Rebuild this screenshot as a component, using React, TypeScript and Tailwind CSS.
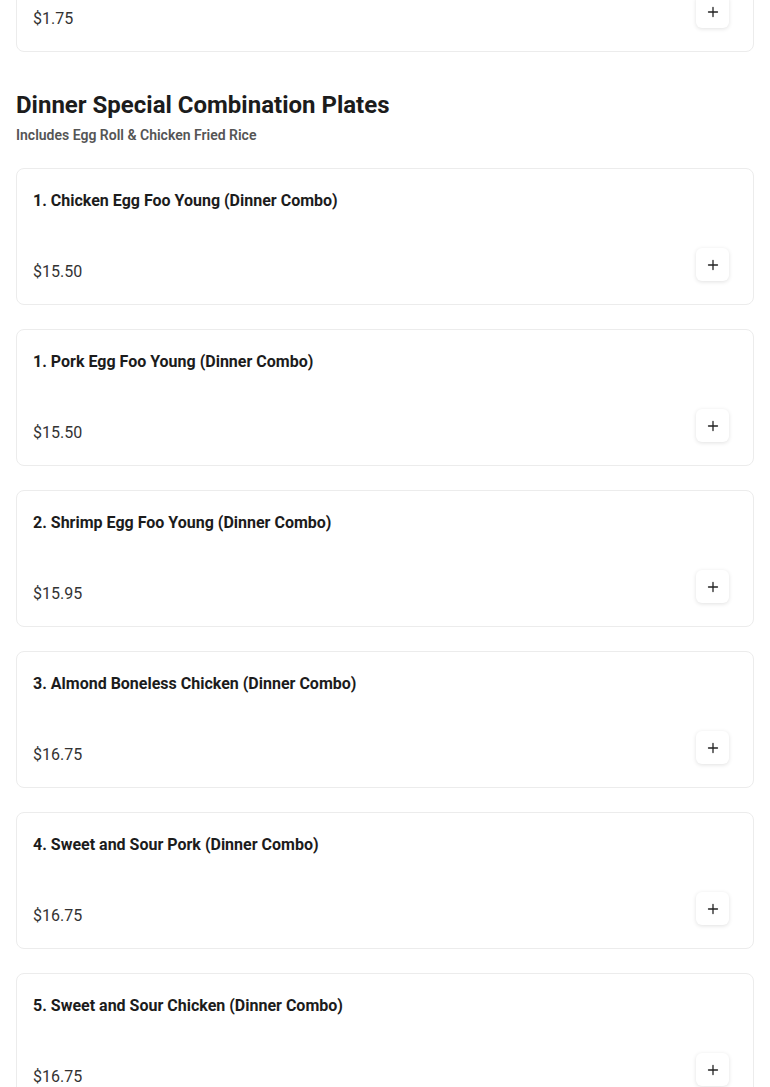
import React from "react";

type Item = { name: string; price: string };

const items: Item[] = [
  { name: "1. Chicken Egg Foo Young (Dinner Combo)", price: "$15.50" },
  { name: "1. Pork Egg Foo Young (Dinner Combo)", price: "$15.50" },
  { name: "2. Shrimp Egg Foo Young (Dinner Combo)", price: "$15.95" },
  { name: "3. Almond Boneless Chicken (Dinner Combo)", price: "$16.75" },
  { name: "4. Sweet and Sour Pork (Dinner Combo)", price: "$16.75" },
  { name: "5. Sweet and Sour Chicken (Dinner Combo)", price: "$16.75" },
];

function PlusIcon() {
  return (
    <svg width="12" height="12" viewBox="0 0 12 12" fill="none">
      <path d="M6 1.5v9M1.5 6h9" stroke="#222" strokeWidth="1.3" strokeLinecap="round" />
    </svg>
  );
}

function Card({ item }: { item: Item }) {
  return (
    <div className="rounded-lg border border-[#ececec] bg-white pt-5 pb-5 pl-4 pr-6">
      <div className="text-base leading-6 font-bold text-[#1c1c1c]">{item.name}</div>
      <div className="mt-[35px] flex items-start justify-between">
        <div className="mt-3 text-base leading-6 text-[#333]">{item.price}</div>
        <button className="flex h-[33px] w-[33px] items-center justify-center rounded-md bg-white shadow-[0_1px_4px_rgba(0,0,0,0.12)]">
          <PlusIcon />
        </button>
      </div>
    </div>
  );
}

export default function App() {
  return (
    <div className="min-h-[1087px] bg-white px-4" style={{ fontFamily: "Roboto, 'Noto Sans', sans-serif" }}>
      <div className="mt-[-85px]">
        <Card item={{ name: "Egg Roll", price: "$1.75" }} />
      </div>
      <div className="mt-[37px]">
        <h2 className="text-2xl leading-8 font-bold text-[#1c1c1c]">Dinner Special Combination Plates</h2>
        <p className="mt-1 text-sm leading-5 font-semibold text-[#555]">Includes Egg Roll &amp; Chicken Fried Rice</p>
      </div>
      <div className="mt-[23px] flex flex-col gap-6 pb-8">
        {items.map((it, i) => (
          <Card key={i} item={it} />
        ))}
      </div>
    </div>
  );
}
